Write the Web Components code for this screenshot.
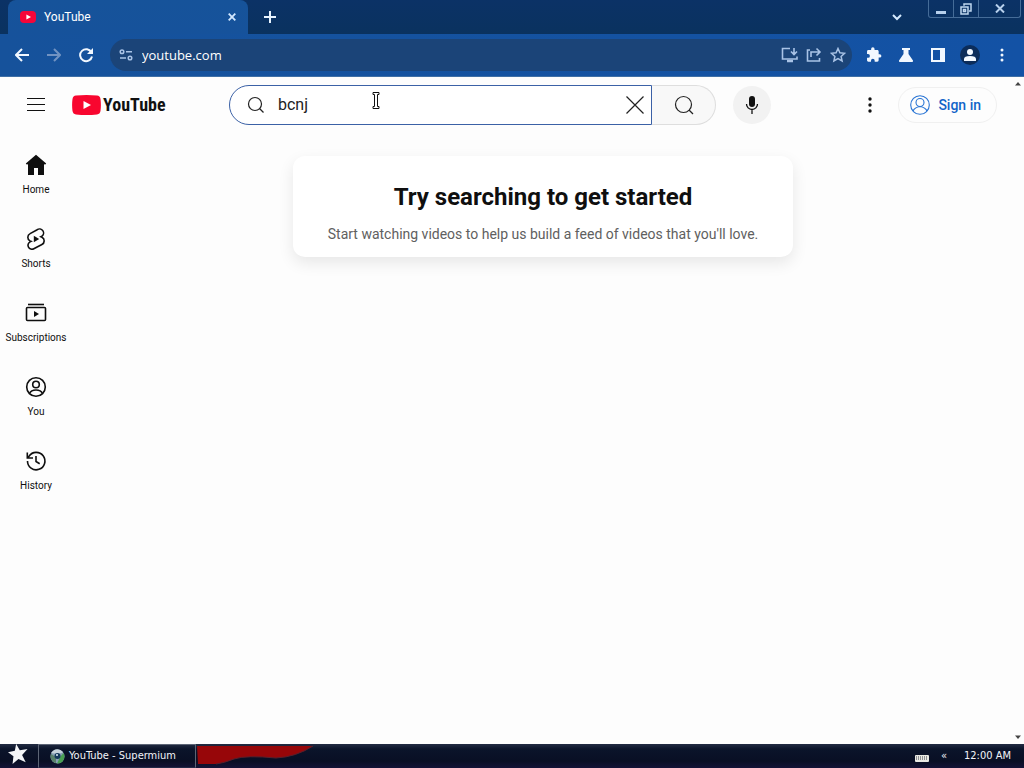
<!DOCTYPE html>
<html lang="en">
<head>
<meta charset="utf-8">
<title>YouTube</title>
<style>
  body { margin: 0; font-family: Roboto, "Liberation Sans", sans-serif; color: #0f0f0f; background: #fdfdfd; }
</style>
</head>
<body>
<desktop-screen></desktop-screen>
<script>
const RESET = `
  * { box-sizing: border-box; }
  button, input { font: inherit; color: inherit; background: none; border: 0; padding: 0; margin: 0; outline: 0; }
  button { display: grid; place-items: center; flex: none; }
  a { color: inherit; text-decoration: none; }
  svg { display: block; flex: none; }
`;
function define(name, html) {
  const t = document.createElement('template');
  t.innerHTML = html;
  customElements.define(name, class extends HTMLElement {
    constructor() {
      super();
      this.attachShadow({ mode: 'open' }).append(t.content.cloneNode(true));
    }
  });
}

define('tab-strip', `
<style>${RESET}
  :host { display: flex; height: 34px; padding-left: 8px; color: #fff; background: linear-gradient(#0b3266, #0a325f); }
  .tab { display: flex; align-items: center; gap: 8px; width: 240px; padding: 0 8px 0 12px; border-radius: 8px 8px 0 0; background: linear-gradient(#16539a, #16529b); font-size: 12px; line-height: 16px; }
  .tab span { flex: 1; }
  .tab button { width: 16px; height: 16px; }
  .new { width: 44px; height: 34px; }
  .list { width: 32px; height: 34px; margin-left: auto; }
  .win { display: flex; width: 93px; height: 18px; margin: 0 3px 0 15px; border: 1px solid #456c98; border-top: 0; border-radius: 0 0 3px 3px; }
  .win button { width: 25px; height: 17px; border-right: 1px solid #456c98; }
  .win button:last-child { flex: 1; border: 0; }
</style>
<div class="tab">
  <svg width="16" height="12" viewBox="0 0 16 12"><rect width="16" height="12" rx="4" fill="#f5063a"/><path d="M6.4 3.4v5.2L11 6z" fill="#fff"/></svg>
  <span>YouTube</span>
  <button aria-label="Close tab"><svg width="8" height="8" viewBox="0 0 8 8"><path d="M.7.7l6.6 6.6M7.3.7L.7 7.3" stroke="#d3e8ff" stroke-width="1.8"/></svg></button>
</div>
<button class="new" aria-label="New tab"><svg width="12" height="12" viewBox="0 0 12 12"><path d="M6 0v12M0 6h12" stroke="#e8f4ff" stroke-width="2"/></svg></button>
<button class="list" aria-label="Search tabs"><svg width="10" height="7" viewBox="0 0 10 7"><path d="M1 1l4 4 4-4" fill="none" stroke="#d5eaff" stroke-width="2"/></svg></button>
<div class="win">
  <button aria-label="Minimize"><svg width="10" height="12" viewBox="0 0 10 12"><path d="M0 9.5h10" stroke="#b7d0ec" stroke-width="3"/></svg></button>
  <button aria-label="Restore"><svg width="12" height="12" viewBox="0 0 12 12" fill="none" stroke="#c0d7ef" stroke-width="1.5"><path d="M4 2.8V1h7v7H9"/><path d="M1 4h7v7H1z"/><path d="M3.5 6.5h2v2h-2z"/></svg></button>
  <button aria-label="Close"><svg width="10" height="9" viewBox="0 0 10 9"><path d="M1 .5l8 8M9 .5l-8 8" stroke="#b7d0ec" stroke-width="2"/></svg></button>
</div>`);

define('tool-bar', `
<style>${RESET}
  :host { display: flex; align-items: center; height: 43px; padding: 0 6px; background: linear-gradient(90deg, #16529b, #1352a5); border-bottom: 1px solid #3f6fa5; color: #f2f8ff; }
  button { width: 32px; height: 32px; }
  .omni { display: flex; align-items: center; flex: 1; min-width: 0; height: 32px; margin: 0 6px 0 8px; padding: 0 2px; border-radius: 16px; background: #1b4478; color: #a9c3e6; }
  .omni input { flex: 1; min-width: 0; color: #fff; font: 13px/20px "Open Sans", sans-serif; }
  .omni button { width: 24px; }
  .omni .site { width: 30px; padding-right: 2px; }
  .me { width: 20px; height: 20px; border-radius: 50%; background: #0b2c5a; display: grid; place-items: center; }
</style>
<button aria-label="Back"><svg width="14" height="14" viewBox="0 0 14 14" fill="none" stroke="currentColor" stroke-width="2"><path d="M14 7H1.5M7 1L1 7l6 6"/></svg></button>
<button aria-label="Forward"><svg width="14" height="14" viewBox="0 0 14 14" fill="none" stroke="#7193c2" stroke-width="2"><path d="M0 7h12.500M7 1l6 6-6 6"/></svg></button>
<button aria-label="Reload"><svg width="16" height="16" viewBox="0 0 16 16"><path d="M13.500 5.500A6 6 0 1 0 14 9.500" fill="none" stroke="currentColor" stroke-width="2"/><path d="M15 1v6H9z" fill="currentColor"/></svg></button>
<div class="omni">
  <button class="site" aria-label="Site information"><svg width="14" height="12" viewBox="0 0 14 12" fill="none" stroke="currentColor" stroke-width="1.500"><circle cx="3" cy="2.800" r="1.800"/><path d="M7 2.800h6M1 9h6"/><circle cx="11" cy="9" r="1.800"/></svg></button>
  <input type="text" value="youtube.com" aria-label="Address and search bar">
  <button aria-label="Install app"><svg width="18" height="16" viewBox="0 0 18 16" fill="none" stroke="currentColor" stroke-width="1.600"><path d="M9 1.500H1.500v10.500h14.500V9.500M13 1v6M10 4.500l3 3 3-3"/><path d="M6 14h6" stroke-width="2.500"/></svg></button>
  <button aria-label="Share"><svg width="16" height="16" viewBox="0 0 16 16" fill="none" stroke="currentColor" stroke-width="1.600"><path d="M4 3H1.500v11h12v-3M5 10V5h8M10.500 1.500L14 5l-3.500 3.500"/></svg></button>
  <button aria-label="Bookmark"><svg width="16" height="16" viewBox="0 0 16 16" fill="none" stroke="currentColor" stroke-width="1.500"><path d="M8 1.500l1.900 4.300 4.700.5-3.500 3.100 1 4.600L8 11.600 3.900 14l1-4.600L1.400 6.300l4.700-.5z"/></svg></button>
</div>
<button aria-label="Extensions"><svg width="20" height="20" viewBox="0 0 24 24" fill="currentColor"><path d="M20.500 11H19V7c0-1.100-.9-2-2-2h-4V3.500a2.500 2.500 0 0 0-5 0V5H4a2 2 0 0 0-2 2v3.800h1.500a2.700 2.700 0 0 1 0 5.400H2V20c0 1.100.9 2 2 2h3.800v-1.500a2.700 2.700 0 0 1 5.400 0V22H17a2 2 0 0 0 2-2v-4h1.500a2.500 2.500 0 0 0 0-5z" transform="translate(2 2) scale(.82)"/></svg></button>
<button aria-label="Labs"><svg width="16" height="16" viewBox="0 0 16 16" fill="currentColor"><path d="M4 1h8v2h-1.500v4l4.500 6.500q.4 1.500-1 1.500H2q-1.400 0-1-1.500L5.500 7V3H4z"/></svg></button>
<button aria-label="Side panel"><svg width="14" height="14" viewBox="0 0 14 14"><path d="M0 0h14v14H0zM2 2v10h7V2z" fill="currentColor" fill-rule="evenodd"/></svg></button>
<button aria-label="Profile"><span class="me"><svg width="14" height="14" viewBox="0 0 14 14" fill="currentColor"><circle cx="7" cy="4" r="3"/><path d="M1 13v-2q0-3 6-3t6 3v2z"/></svg></span></button>
<button aria-label="Menu"><svg width="4" height="14" viewBox="0 0 4 14" fill="currentColor"><circle cx="2" cy="2" r="1.500"/><circle cx="2" cy="7" r="1.500"/><circle cx="2" cy="12" r="1.500"/></svg></button>`);

define('yt-masthead', `
<style>${RESET}
  :host { display: grid; grid-template-columns: 229px minmax(0, 542px) 1fr; align-items: center; height: 56px; }
  .start { display: flex; align-items: center; padding-left: 16px; }
  .guide { width: 40px; height: 40px; }
  .logo { display: flex; align-items: center; gap: 2px; margin-left: 16px; font: bold 18px/24px "Liberation Sans Narrow", "Roboto Condensed", "Liberation Sans", sans-serif; color: #111; }
  form { display: flex; height: 40px; }
  .box { display: flex; align-items: center; flex: 1; min-width: 0; padding-left: 16px; border: 1px solid #3b61a6; border-radius: 20px 0 0 20px; background: #fff; }
  .box input { flex: 1; min-width: 0; margin-left: 12px; font-size: 16px; line-height: 24px; color: #222; }
  .clear { width: 32px; height: 38px; }
  .go { width: 64px; border: 1px solid #dedede; border-left: 0; border-radius: 0 20px 20px 0; background: #f8f8f8; }
  .mic { width: 38px; height: 38px; margin: 1px 0 0 17px; border-radius: 50%; background: #f2f2f2; }
  .end { display: flex; align-items: center; justify-content: flex-end; padding-right: 15px; gap: 8px; }
  .more { width: 40px; height: 40px; }
  .sign { display: flex; align-items: center; gap: 8px; height: 36px; padding: 0 15px 0 11px; border: 1px solid #f0f0f0; border-radius: 18px; color: #1264c8; font-weight: 500; font-size: 14px; line-height: 20px; }
</style>
<div class="start">
  <button class="guide" aria-label="Guide"><svg width="18" height="14" viewBox="0 0 18 14"><path d="M0 .5h18M0 6.500h18M0 12.500h18" stroke="#111" stroke-width="1"/></svg></button>
  <a class="logo" href="#" aria-label="YouTube Home"><svg width="29" height="20" viewBox="0 0 29 20"><path d="M4 .6Q14.500-.5 25 .6q3 .3 3.500 3.400.8 6 0 12-.5 3.100-3.500 3.400-10.500 1.100-21 0Q1 19.100.5 16q-.8-6 0-12Q1 .9 4 .6z" fill="#f8062f"/><path d="M11.500 6v8l7.500-4z" fill="#fff"/></svg><span>YouTube</span></a>
</div>
<form role="search" onsubmit="return false">
  <div class="box">
    <svg width="20" height="20" viewBox="0 0 20 20" fill="none" stroke="#222" stroke-width="1.200"><circle cx="9" cy="9" r="6.500"/><path d="M13.500 13.500l4 4"/></svg>
    <input type="text" value="bcnj" aria-label="Search">
    <button class="clear" type="button" aria-label="Clear"><svg width="18" height="18" viewBox="0 0 18 18"><path d="M.5.5l17 17M17.500.5l-17 17" stroke="#222" stroke-width="1.200"/></svg></button>
  </div>
  <button class="go" aria-label="Search"><svg width="20" height="20" viewBox="0 0 20 20" fill="none" stroke="#222" stroke-width="1.200"><circle cx="9.500" cy="9.500" r="8"/><path d="M15 15l4 4"/></svg></button>
  <button class="mic" type="button" aria-label="Search with your voice"><svg width="14" height="20" viewBox="0 0 14 20"><rect x="4" y="1" width="6" height="11" rx="3" fill="#111"/><path d="M1.500 9a5.500 5.500 0 0 0 11 0M7 14.500V19" fill="none" stroke="#111" stroke-width="1.300"/></svg></button>
</form>
<div class="end">
  <button class="more" aria-label="Settings"><svg width="4" height="16" viewBox="0 0 4 16" fill="#111"><circle cx="2" cy="2" r="1.700"/><circle cx="2" cy="8" r="1.700"/><circle cx="2" cy="14" r="1.700"/></svg></button>
  <a class="sign" href="#"><svg width="20" height="20" viewBox="0 0 20 20" fill="none" stroke="#2874d4" stroke-width="1.100"><circle cx="10" cy="10" r="9.300"/><circle cx="10" cy="7.500" r="4"/><path d="M3 16q1.500-3.500 7-4.500 5.500 1 7 4.500"/></svg>Sign in</a>
</div>`);

define('guide-item', `
<style>${RESET}
  :host { display: block; }
  a { display: flex; flex-direction: column; align-items: center; gap: 6px; height: 74px; padding-top: 16px; font-size: 10px; line-height: 14px; color: #0f0f0f; white-space: nowrap; }
</style>
<a href="#"><slot name="icon"></slot><slot></slot></a>`);

define('mini-guide', `
<style>${RESET}
  :host { display: block; width: 72px; padding-top: 4px; flex: none; }
</style>
<nav>
  <guide-item><svg slot="icon" width="24" height="24" viewBox="0 0 24 24"><path d="M12 1.800L1.800 10.500l1.200 1.300 1-.8V22h6v-7h4v7h6V11l1 .8 1.200-1.300z" fill="#0f0f0f"/></svg>Home</guide-item>
  <guide-item><svg slot="icon" width="24" height="24" viewBox="0 0 24 24"><path d="M13.200 2.700L6.100 6.600a4.100 4.100 0 0 0-.1 7.300l1.100.5-1 .5c-2 1.100-2.700 3.400-1.600 5.300 1 1.900 3.400 2.600 5.300 1.600l8.100-4.300a4.100 4.100 0 0 0 .1-7.300l-1.100-.5 1-.5a3.900 3.900 0 0 0-4.700-6.500z" fill="none" stroke="#0f0f0f" stroke-width="1.600"/><path d="M9.800 8.800v6.400l5.400-3.200z" fill="#0f0f0f"/></svg>Shorts</guide-item>
  <guide-item><svg slot="icon" width="24" height="24" viewBox="0 0 24 24"><path d="M4 3.500h16" stroke="#0f0f0f" stroke-width="1.600"/><rect x="2.500" y="6.500" width="19" height="13" rx="1" fill="none" stroke="#0f0f0f" stroke-width="1.600"/><path d="M10 10v6l5-3z" fill="#0f0f0f"/></svg>Subscriptions</guide-item>
  <guide-item><svg slot="icon" width="24" height="24" viewBox="0 0 24 24" fill="none" stroke="#0f0f0f" stroke-width="1.600"><circle cx="12" cy="12" r="9.300"/><circle cx="12" cy="9.500" r="3.300"/><path d="M5.500 18.500q1.500-3.500 6.500-3.500t6.500 3.500"/></svg>You</guide-item>
  <guide-item><svg slot="icon" width="24" height="24" viewBox="0 0 24 24" fill="none" stroke="#0f0f0f" stroke-width="1.600"><path d="M3.500 12A8.700 8.700 0 1 0 5 7.200L3.300 9M3.300 3.500V9H9M12 7v5.500l3.700 2.300"/></svg>History</guide-item>
</nav>`);

define('feed-nudge', `
<style>${RESET}
  :host { display: block; width: 500px; max-width: 100%; height: fit-content; padding: 24px 16px 13px; border-radius: 12px; background: #fff; box-shadow: 0 6px 16px rgba(0,0,0,.09); text-align: center; }
  h1 { margin: 0 0 10px; font-size: 24px; line-height: 34px; font-weight: 700; }
  p { margin: 0; font-size: 14px; line-height: 20px; color: #606060; }
</style>
<h1>Try searching to get started</h1>
<p>Start watching videos to help us build a feed of videos that you'll love.</p>`);

define('page-scrollbar', `
<style>${RESET}
  :host { display: flex; flex-direction: column; justify-content: space-between; align-items: center; width: 12px; padding: 5px 0; flex: none; }
</style>
<svg width="6" height="4" viewBox="0 0 6 4"><path d="M3 0l3 3.500H0z" fill="#444"/></svg>
<svg width="6" height="4" viewBox="0 0 6 4"><path d="M0 .5h6L3 4z" fill="#444"/></svg>`);

define('task-bar', `
<style>${RESET}
  :host { display: flex; align-items: stretch; height: 24px; overflow: hidden; background: linear-gradient(#232c43, #0b142a 5px, #090f24 17px, #141337); color: #f2f4f8; font: 11px/16px "DejaVu Sans Condensed", "DejaVu Sans", sans-serif; }
  .start { width: 38px; padding: 0 3px 4px 0; }
  .task { display: flex; align-items: center; justify-content: flex-start; gap: 4px; width: 158px; padding-left: 11px; border: 1px solid #5c6475; border-bottom: 1px solid #222946; white-space: nowrap; }
  .tray { display: flex; align-items: center; gap: 12px; margin-left: auto; padding-right: 13px; white-space: nowrap; }
  time { margin-left: 5px; }
</style>
<button class="start" aria-label="Start"><svg width="20" height="20" viewBox="0 0 22 22"><path d="M9 0l4 7 8.500-1.500-6 6.500 4 8-8-3.500L5 22l1-8.500L0 9l7.500-1.500z" fill="#f4f5f8"/></svg></button>
<button class="task"><svg width="15" height="15" viewBox="0 0 15 15"><circle cx="7.500" cy="7.500" r="7" fill="#88a0b5"/><path d="M1 4a7 7 0 0 1 12-.5L8 5z" fill="#c5d2da"/><path d="M13.500 4A7 7 0 0 1 7 14.500L10 8z" fill="#49a052"/><path d="M1 5a7 7 0 0 0 5 9.300L6 8z" fill="#58816a"/><circle cx="7.500" cy="7" r="3" fill="#14395a"/><circle cx="7" cy="6" r="1" fill="#dcecf5"/></svg>YouTube - Supermium</button>
<svg width="120" height="24" viewBox="0 0 120 24"><path d="M1 2h116Q100 13 80 14q-30-3-42 1-10 4-18 5H2z" fill="#970609"/><path d="M117 2Q100 13 80 14q-30-3-42 1-10 4-18 5" fill="none" stroke="#59202c"/></svg>
<div class="tray">
  <svg width="14" height="24" viewBox="0 0 14 24"><rect y="11" width="14" height="7" rx="1" fill="#e9e9e3"/><path d="M1 13h12M1 15h12" stroke="#343744" stroke-width="1" stroke-dasharray="1 1"/></svg>
  <span>«</span>
  <time datetime="00:00">12:00 AM</time>
</div>`);

define('desktop-screen', `
<style>${RESET}
  :host { display: flex; flex-direction: column; min-height: 100vh; }
  .page { display: flex; flex: 1; background: #fdfdfd; }
  .view { flex: 1; min-width: 0; }
  .cols { display: flex; }
  main { flex: 1; min-width: 0; display: flex; justify-content: center; padding: 23px 0 0 2px; }
  .cursor { position: absolute; left: 372px; top: 92px; pointer-events: none; }
</style>
<tab-strip></tab-strip>
<tool-bar></tool-bar>
<div class="page">
  <div class="view">
    <yt-masthead></yt-masthead>
    <div class="cols">
      <mini-guide></mini-guide>
      <main><feed-nudge></feed-nudge></main>
    </div>
  </div>
  <page-scrollbar></page-scrollbar>
</div>
<task-bar></task-bar>
<svg class="cursor" width="8" height="17" viewBox="0 0 8 17"><path d="M1 .5h6v2H5.500v12H7v2H1v-2h1.500v-12H1z" fill="#fff" stroke="#111" stroke-width="1"/></svg>`);
</script>
</body>
</html>
